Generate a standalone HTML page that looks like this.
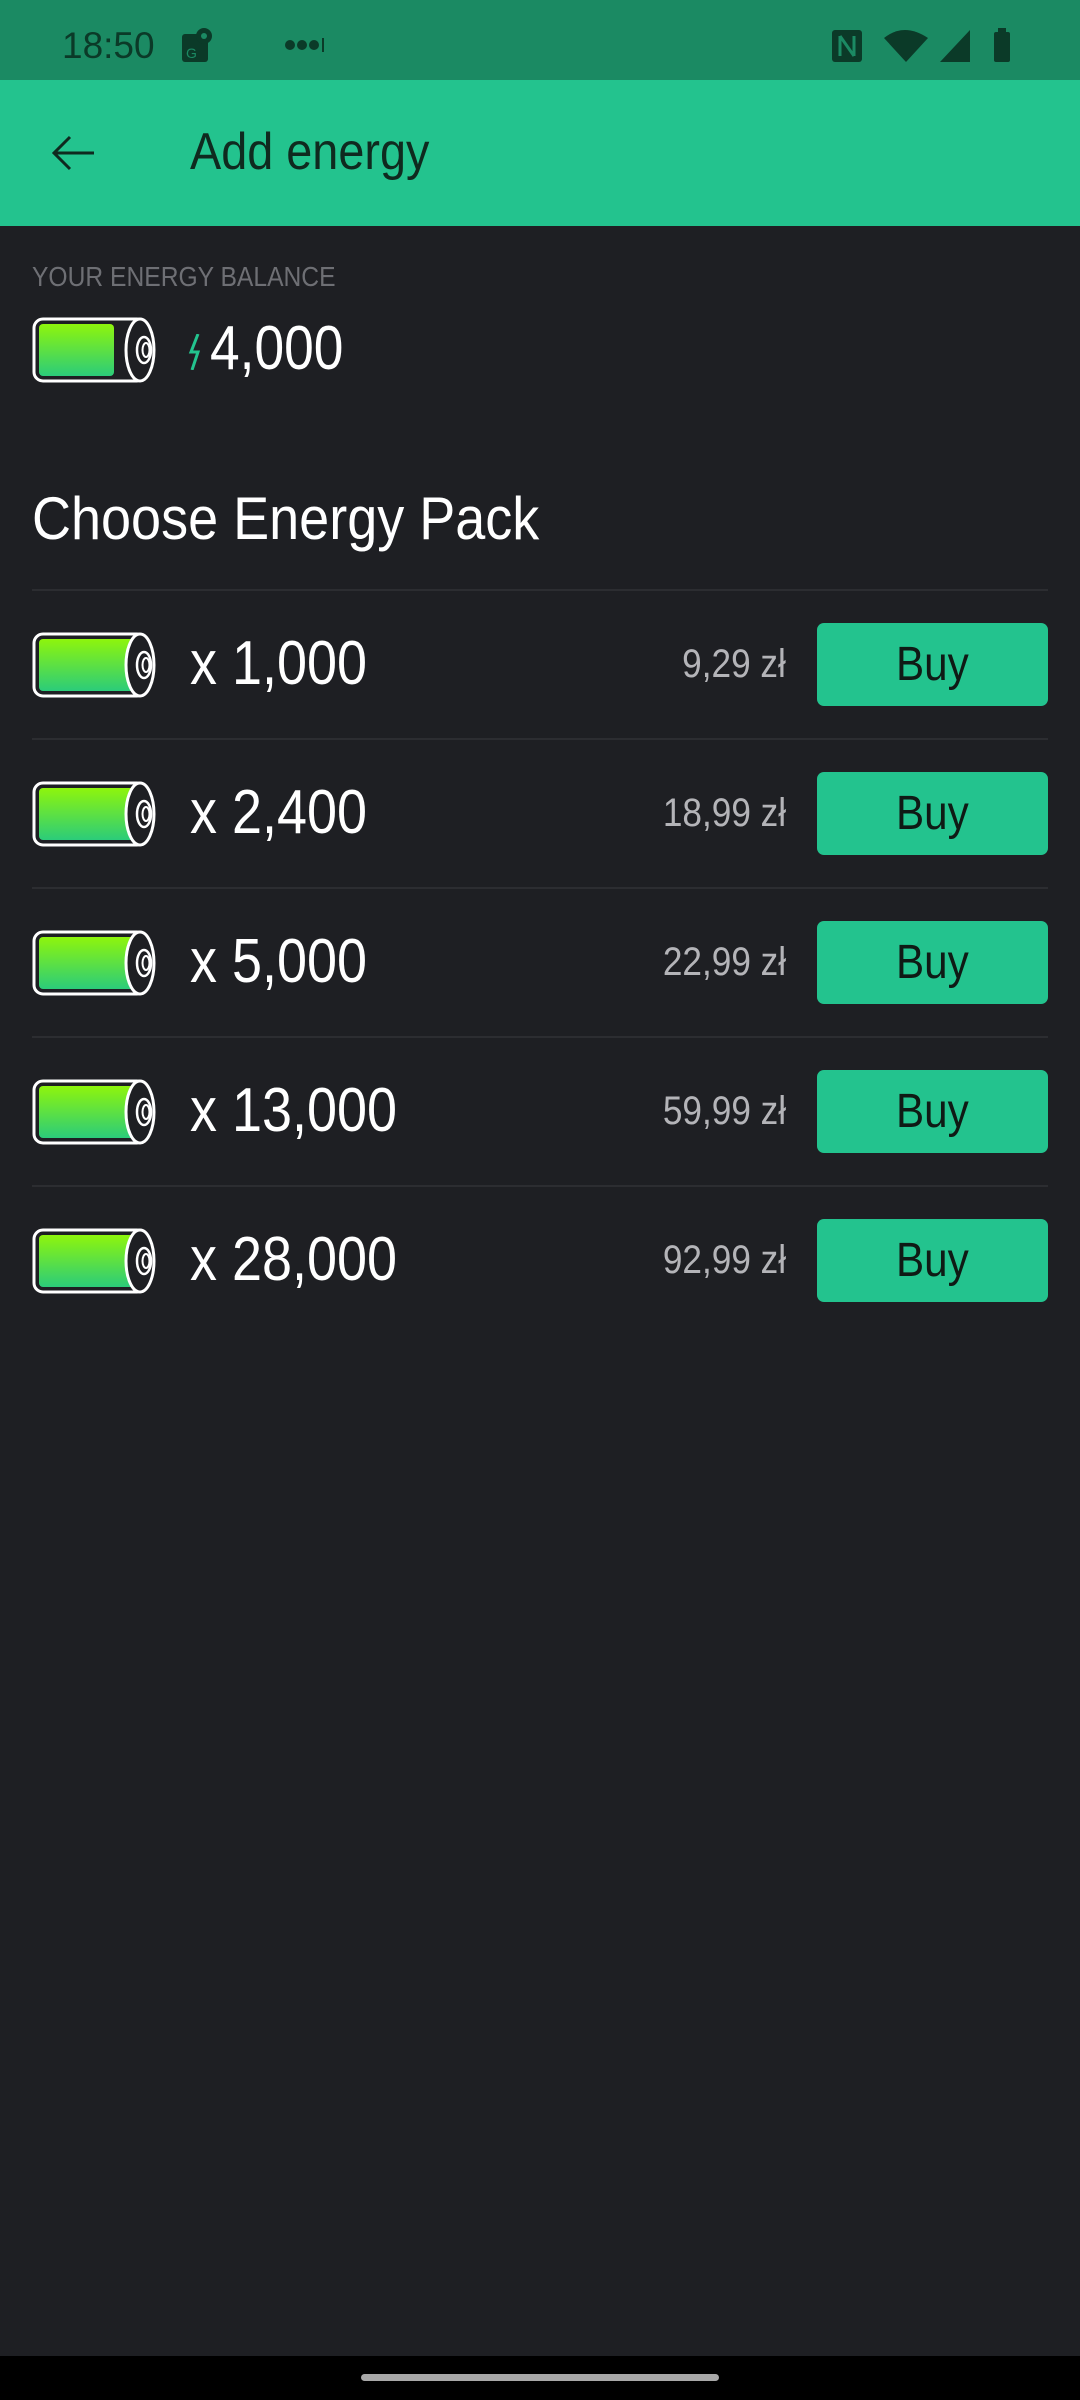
<!DOCTYPE html>
<html><head><meta charset="utf-8"><style>
html,body{margin:0;padding:0}
body{width:1080px;height:2400px;background:#1e1f23;position:relative;overflow:hidden;font-family:"Liberation Sans",sans-serif}
.abs{position:absolute}
.row-div{position:absolute;left:32px;width:1016px;height:2px;background:#2c2d31}
.bat{position:absolute;left:32px;width:126px;height:66px}
.qty{position:absolute;left:190px;color:#fff;font-size:62px;line-height:60px;transform:scaleX(0.87);transform-origin:left}
.price{position:absolute;right:294px;color:#b4b4b8;font-size:40px;line-height:44px;transform:scaleX(0.88);transform-origin:right}
.buy{position:absolute;left:817px;width:231px;height:83px;background:#23c38e;border-radius:7px;color:#0f1a15;font-size:48px;line-height:83px;text-align:center}
.buy span{display:inline-block;transform:scaleX(0.88)}
</style></head><body>
<div class="abs" style="left:0;top:0;width:1080px;height:80px;background:#1b8a63"></div>
<div class="abs" style="left:62px;top:26px;font-size:37px;color:#0b3a28;line-height:40px">18:50</div>
<svg class="abs" style="left:180px;top:26px" width="34" height="38" viewBox="0 0 34 38"><rect x="2" y="8" width="26" height="28" rx="3" fill="#0b3a28"/><circle cx="24" cy="10" r="8" fill="#0b3a28"/><circle cx="24" cy="10" r="3" fill="#1b8a63"/><text x="6" y="32" font-size="14" fill="#1b8a63" font-family="Liberation Sans">G</text></svg>
<div class="abs" style="left:285px;top:38px;width:40px;height:12px"><svg width="44" height="14"><circle cx="5" cy="7" r="5" fill="#0b3a28"/><circle cx="17" cy="7" r="5" fill="#0b3a28"/><circle cx="29" cy="7" r="5" fill="#0b3a28"/><rect x="37" y="0" width="2" height="14" fill="#0b3a28"/></svg></div>
<svg class="abs" style="left:832px;top:28px" width="186" height="36" viewBox="0 0 186 36"><rect x="0" y="2" width="30" height="32" rx="3" fill="#0b3a28"/><path d="M8 8v20M8 8l14 20M22 8v20" stroke="#1b8a63" stroke-width="3" fill="none"/><path d="M52 10q20-16 44 0l-22 24z" fill="#0b3a28"/><path d="M108 34l30-32v32z" fill="#0b3a28"/><rect x="162" y="4" width="16" height="30" rx="2" fill="#0b3a28"/><rect x="166" y="0" width="8" height="5" fill="#0b3a28"/></svg>
<div class="abs" style="left:0;top:80px;width:1080px;height:146px;background:#23c38e"></div>
<svg class="abs" style="left:50px;top:134px" width="46" height="38" viewBox="0 0 46 38"><path d="M44 19H4M20 3L4 19l16 16" stroke="#0f2a1f" stroke-width="3" fill="none"/></svg>
<div class="abs" style="left:190px;top:122px;font-size:52px;line-height:60px;color:#0f2a1f;transform:scaleX(0.9);transform-origin:left">Add energy</div>
<div class="abs" style="left:32px;top:262px;font-size:28px;color:#6e6f74;line-height:30px;transform:scaleX(0.88);transform-origin:left">YOUR ENERGY BALANCE</div>

<svg width="0" height="0" style="position:absolute"><defs><linearGradient id="g" x1="0" y1="0" x2="0" y2="1"><stop offset="0" stop-color="#8ef50c"/><stop offset="1" stop-color="#2bcc7a"/></linearGradient></defs></svg>

<svg class="bat" style="top:317px" viewBox="0 0 126 66"><rect x="2" y="2" width="112" height="62" rx="9" fill="#1e1f23" stroke="#fff" stroke-width="3"/><rect x="7" y="7" width="75" height="52" rx="4" fill="url(#g)"/><ellipse cx="108" cy="33" rx="14" ry="31" fill="#1e1f23" stroke="#fff" stroke-width="3"/><ellipse cx="112" cy="33" rx="7" ry="13" fill="none" stroke="#fff" stroke-width="2.5"/><ellipse cx="114" cy="33" rx="3.5" ry="7" fill="none" stroke="#fff" stroke-width="2"/></svg>
<svg class="abs" style="left:188px;top:334px" width="14" height="36" viewBox="0 0 14 36"><path d="M10 0L3 18h7L4 36" stroke="#23c38e" stroke-width="3" fill="none"/></svg>
<div class="abs" style="left:210px;top:316px;font-size:62px;line-height:66px;color:#fff;transform:scaleX(0.86);transform-origin:left">4,000</div>
<div class="abs" style="left:32px;top:484px;font-size:60px;line-height:70px;color:#fff;transform:scaleX(0.9);transform-origin:left">Choose Energy Pack</div>

<div class="row-div" style="top:589px"></div>
<div class="row-div" style="top:738px"></div>
<div class="row-div" style="top:887px"></div>
<div class="row-div" style="top:1036px"></div>
<div class="row-div" style="top:1185px"></div>

<svg class="bat" style="top:632px" viewBox="0 0 126 66"><rect x="2" y="2" width="112" height="62" rx="9" fill="#1e1f23" stroke="#fff" stroke-width="3"/><rect x="7" y="7" width="96" height="52" rx="4" fill="url(#g)"/><ellipse cx="108" cy="33" rx="14" ry="31" fill="#1e1f23" stroke="#fff" stroke-width="3"/><ellipse cx="112" cy="33" rx="7" ry="13" fill="none" stroke="#fff" stroke-width="2.5"/><ellipse cx="114" cy="33" rx="3.5" ry="7" fill="none" stroke="#fff" stroke-width="2"/></svg>
<div class="qty" style="top:634px">x 1,000</div>
<div class="price" style="top:642px">9,29 zł</div>
<div class="buy" style="top:623px"><span>Buy</span></div>

<svg class="bat" style="top:781px" viewBox="0 0 126 66"><rect x="2" y="2" width="112" height="62" rx="9" fill="#1e1f23" stroke="#fff" stroke-width="3"/><rect x="7" y="7" width="96" height="52" rx="4" fill="url(#g)"/><ellipse cx="108" cy="33" rx="14" ry="31" fill="#1e1f23" stroke="#fff" stroke-width="3"/><ellipse cx="112" cy="33" rx="7" ry="13" fill="none" stroke="#fff" stroke-width="2.5"/><ellipse cx="114" cy="33" rx="3.5" ry="7" fill="none" stroke="#fff" stroke-width="2"/></svg>
<div class="qty" style="top:783px">x 2,400</div>
<div class="price" style="top:791px">18,99 zł</div>
<div class="buy" style="top:772px"><span>Buy</span></div>

<svg class="bat" style="top:930px" viewBox="0 0 126 66"><rect x="2" y="2" width="112" height="62" rx="9" fill="#1e1f23" stroke="#fff" stroke-width="3"/><rect x="7" y="7" width="96" height="52" rx="4" fill="url(#g)"/><ellipse cx="108" cy="33" rx="14" ry="31" fill="#1e1f23" stroke="#fff" stroke-width="3"/><ellipse cx="112" cy="33" rx="7" ry="13" fill="none" stroke="#fff" stroke-width="2.5"/><ellipse cx="114" cy="33" rx="3.5" ry="7" fill="none" stroke="#fff" stroke-width="2"/></svg>
<div class="qty" style="top:932px">x 5,000</div>
<div class="price" style="top:940px">22,99 zł</div>
<div class="buy" style="top:921px"><span>Buy</span></div>

<svg class="bat" style="top:1079px" viewBox="0 0 126 66"><rect x="2" y="2" width="112" height="62" rx="9" fill="#1e1f23" stroke="#fff" stroke-width="3"/><rect x="7" y="7" width="96" height="52" rx="4" fill="url(#g)"/><ellipse cx="108" cy="33" rx="14" ry="31" fill="#1e1f23" stroke="#fff" stroke-width="3"/><ellipse cx="112" cy="33" rx="7" ry="13" fill="none" stroke="#fff" stroke-width="2.5"/><ellipse cx="114" cy="33" rx="3.5" ry="7" fill="none" stroke="#fff" stroke-width="2"/></svg>
<div class="qty" style="top:1081px">x 13,000</div>
<div class="price" style="top:1089px">59,99 zł</div>
<div class="buy" style="top:1070px"><span>Buy</span></div>

<svg class="bat" style="top:1228px" viewBox="0 0 126 66"><rect x="2" y="2" width="112" height="62" rx="9" fill="#1e1f23" stroke="#fff" stroke-width="3"/><rect x="7" y="7" width="96" height="52" rx="4" fill="url(#g)"/><ellipse cx="108" cy="33" rx="14" ry="31" fill="#1e1f23" stroke="#fff" stroke-width="3"/><ellipse cx="112" cy="33" rx="7" ry="13" fill="none" stroke="#fff" stroke-width="2.5"/><ellipse cx="114" cy="33" rx="3.5" ry="7" fill="none" stroke="#fff" stroke-width="2"/></svg>
<div class="qty" style="top:1230px">x 28,000</div>
<div class="price" style="top:1238px">92,99 zł</div>
<div class="buy" style="top:1219px"><span>Buy</span></div>

<div class="abs" style="left:0;top:2356px;width:1080px;height:44px;background:#000"></div>
<div class="abs" style="left:361px;top:2374px;width:358px;height:7px;border-radius:4px;background:#a8a8a8"></div>
</body></html>
